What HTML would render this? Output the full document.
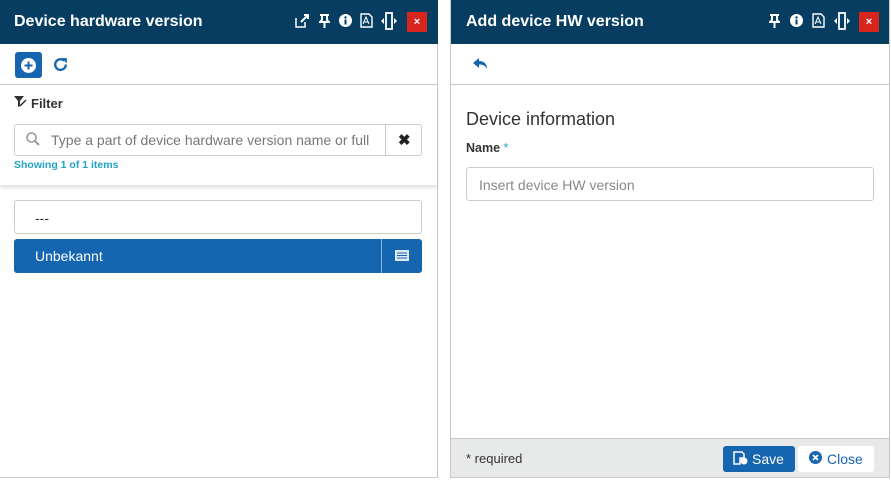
<!DOCTYPE html>
<html><head><style>
*{box-sizing:border-box;margin:0;padding:0}
body{width:891px;height:480px;background:#fff;font-family:"Liberation Sans",sans-serif;position:relative;overflow:hidden}
.abs{position:absolute}
.hdr{background:#063d61;color:#fff;font-weight:bold;font-size:16px;height:44px}
.x{position:absolute;top:12px;width:20px;height:20px;background:#d9261c;color:#fff;font-size:11px;font-weight:bold;text-align:center;line-height:20px}
</style></head><body>
<div class="abs" style="left:0;top:0;width:438px;height:478px;border-right:1px solid #c8c8c8;border-bottom:1px solid #c8c8c8"></div>
<div class="abs hdr" style="left:0;top:0;width:438px"><span class="abs" style="left:14px;top:13px">Device hardware version</span>
<svg class="abs" style="left:295px;top:14px" width="14" height="14" viewBox="0 0 14 14"><path d="M1 4v9h9V8" fill="none" stroke="#fff" stroke-width="1.5"/><path d="M6 8l6-6M9 1h4v4" stroke="#fff" stroke-width="2" fill="none"/></svg>
<svg class="abs" style="left:319px;top:14px" width="11" height="14" viewBox="0 0 11 14"><path d="M1 1h9M3 1v5L1 8h9L8 6V1M5.5 8v6" stroke="#fff" stroke-width="2" fill="none"/></svg>
<svg class="abs" style="left:339px;top:14px" width="13" height="13"><circle cx="6.5" cy="6.5" r="6.5" fill="#fff"/><rect x="5.5" y="5.5" width="2" height="5" fill="#063d61"/><circle cx="6.5" cy="3.5" r="1.2" fill="#063d61"/></svg>
<svg class="abs" style="left:360px;top:13px" width="13" height="15"><path d="M1 1h8l3 3v10H1z" fill="none" stroke="#fff" stroke-width="1.4"/><path d="M3 11l3-7 3 7M4 9h4" stroke="#fff" stroke-width="1" fill="none"/></svg>
<svg class="abs" style="left:381px;top:12px" width="16" height="18"><rect x="5" y="1" width="6" height="16" fill="none" stroke="#fff" stroke-width="1.8"/><path d="M3 6l-3 3 3 3M13 6l3 3-3 3" fill="#fff"/></svg>
<div class="x" style="left:407px">×</div></div>
<div class="abs" style="left:15px;top:52px;width:27px;height:26px;background:#1565b0;border-radius:3px"><svg style="position:absolute;left:6px;top:6px" width="15" height="15"><circle cx="7.5" cy="7.5" r="7.5" fill="#fff"/><path d="M7.5 3.5v8M3.5 7.5h8" stroke="#1565b0" stroke-width="2"/></svg></div>
<svg class="abs" style="left:52px;top:56px" width="17" height="17" viewBox="0 0 16 16"><path d="M13 8A5 5 0 1 1 11.5 4.5" fill="none" stroke="#1565b0" stroke-width="2.2"/><path d="M9 2h5v5z" fill="#1565b0"/></svg>
<div class="abs" style="left:0;top:84px;width:437px;border-top:1px solid #c8c8c8"></div>
<div class="abs" style="left:0;top:85px;width:437px;height:100px;box-shadow:0 3px 4px rgba(0,0,0,.12)"></div>
<svg class="abs" style="left:14px;top:96px" width="13" height="12"><path d="M0 0h10L6 5v5L4 11V5z" fill="#333"/><path d="M6 10l6-6" stroke="#333" stroke-width="1.5"/></svg>
<div class="abs" style="left:31px;top:96px;font-size:13px;font-weight:bold;color:#333">Filter</div>
<div class="abs" style="left:14px;top:124px;width:408px;height:32px;border:1px solid #ccc;border-radius:3px"></div>
<div class="abs" style="left:385px;top:125px;height:30px;border-left:1px solid #ccc"></div>
<svg class="abs" style="left:26px;top:132px" width="14" height="14"><circle cx="5.5" cy="5.5" r="4.5" fill="none" stroke="#999" stroke-width="1.6"/><path d="M9 9l4 4" stroke="#999" stroke-width="2"/></svg>
<div class="abs" style="left:51px;top:132px;font-size:14px;color:#777;white-space:nowrap;width:330px;overflow:hidden">Type a part of device hardware version name or full</div>
<div class="abs" style="left:398px;top:131px;font-size:15px;font-weight:bold;color:#222">✖</div>
<div class="abs" style="left:14px;top:159px;font-size:10.5px;font-weight:bold;color:#21a3c6">Showing 1 of 1 items</div>
<div class="abs" style="left:14px;top:200px;width:408px;height:34px;border:1px solid #ccc;border-radius:3px;font-size:14px;color:#333;padding:9px 20px">---</div>
<div class="abs" style="left:14px;top:239px;width:408px;height:34px;background:#1565b0;border-radius:3px;color:#fff;font-size:14px;padding:9px 21px">Unbekannt</div>
<div class="abs" style="left:381px;top:239px;height:34px;border-left:1px solid #8fb2d6"></div>
<svg class="abs" style="left:395px;top:250px" width="14" height="11"><rect width="14" height="11" fill="#dfe9f5"/><path d="M2 3h10M2 5.5h10M2 8h10" stroke="#1565b0" stroke-width="1"/></svg>
<div class="abs" style="left:450px;top:0;width:440px;height:478px;border-left:1px solid #c8c8c8;border-right:1px solid #c8c8c8;border-bottom:1px solid #c8c8c8"></div>
<div class="abs hdr" style="left:451px;top:0;width:438px"><span class="abs" style="left:15px;top:13px">Add device HW version</span>
<svg class="abs" style="left:318px;top:14px" width="11" height="14" viewBox="0 0 11 14"><path d="M1 1h9M3 1v5L1 8h9L8 6V1M5.5 8v6" stroke="#fff" stroke-width="2" fill="none"/></svg>
<svg class="abs" style="left:339px;top:14px" width="13" height="13"><circle cx="6.5" cy="6.5" r="6.5" fill="#fff"/><rect x="5.5" y="5.5" width="2" height="5" fill="#063d61"/><circle cx="6.5" cy="3.5" r="1.2" fill="#063d61"/></svg>
<svg class="abs" style="left:361px;top:13px" width="13" height="15"><path d="M1 1h8l3 3v10H1z" fill="none" stroke="#fff" stroke-width="1.4"/><path d="M3 11l3-7 3 7M4 9h4" stroke="#fff" stroke-width="1" fill="none"/></svg>
<svg class="abs" style="left:383px;top:12px" width="16" height="18"><rect x="5" y="1" width="6" height="16" fill="none" stroke="#fff" stroke-width="1.8"/><path d="M3 6l-3 3 3 3M13 6l3 3-3 3" fill="#fff"/></svg>
<div class="x" style="left:408px">×</div></div>
<svg class="abs" style="left:473px;top:58px" width="15" height="12"><path d="M0 5L6 0v3c5 0 8 3 8 8C12 7 9 6.5 6 6.5V10z" fill="#1565b0"/></svg>
<div class="abs" style="left:451px;top:84px;width:438px;border-top:1px solid #c8c8c8"></div>
<div class="abs" style="left:466px;top:109px;font-size:18px;color:#333">Device information</div>
<div class="abs" style="left:466px;top:141px;font-size:12.5px;font-weight:bold;color:#333">Name <span style="color:#21a3c6;font-weight:normal">*</span></div>
<div class="abs" style="left:466px;top:167px;width:408px;height:34px;border:1px solid #ccc;border-radius:3px;font-size:14px;color:#888;padding:9px 12px">Insert device HW version</div>
<div class="abs" style="left:451px;top:438px;width:438px;height:39px;background:#e8e9e9;border-top:1px solid #c8c8c8"></div>
<div class="abs" style="left:466px;top:451px;font-size:13px;color:#333">* required</div>
<div class="abs" style="left:723px;top:446px;width:72px;height:26px;background:#1565b0;border-radius:3px;color:#fff;font-size:14px;padding:5px 0 0 29px">Save</div>
<svg class="abs" style="left:733px;top:451px" width="15" height="14"><path d="M1 1h8l2 2v4H7v6H1z" fill="none" stroke="#fff" stroke-width="1.5"/><circle cx="11" cy="10" r="3.5" fill="#fff"/></svg>
<div class="abs" style="left:798px;top:446px;width:76px;height:26px;background:#fff;border-radius:3px;color:#1565b0;font-size:14px;padding:5px 0 0 29px">Close</div>
<svg class="abs" style="left:809px;top:451px" width="13" height="13"><circle cx="6.5" cy="6.5" r="6.5" fill="#1565b0"/><path d="M4 4l5 5M9 4l-5 5" stroke="#fff" stroke-width="1.8"/></svg>
</body></html>
